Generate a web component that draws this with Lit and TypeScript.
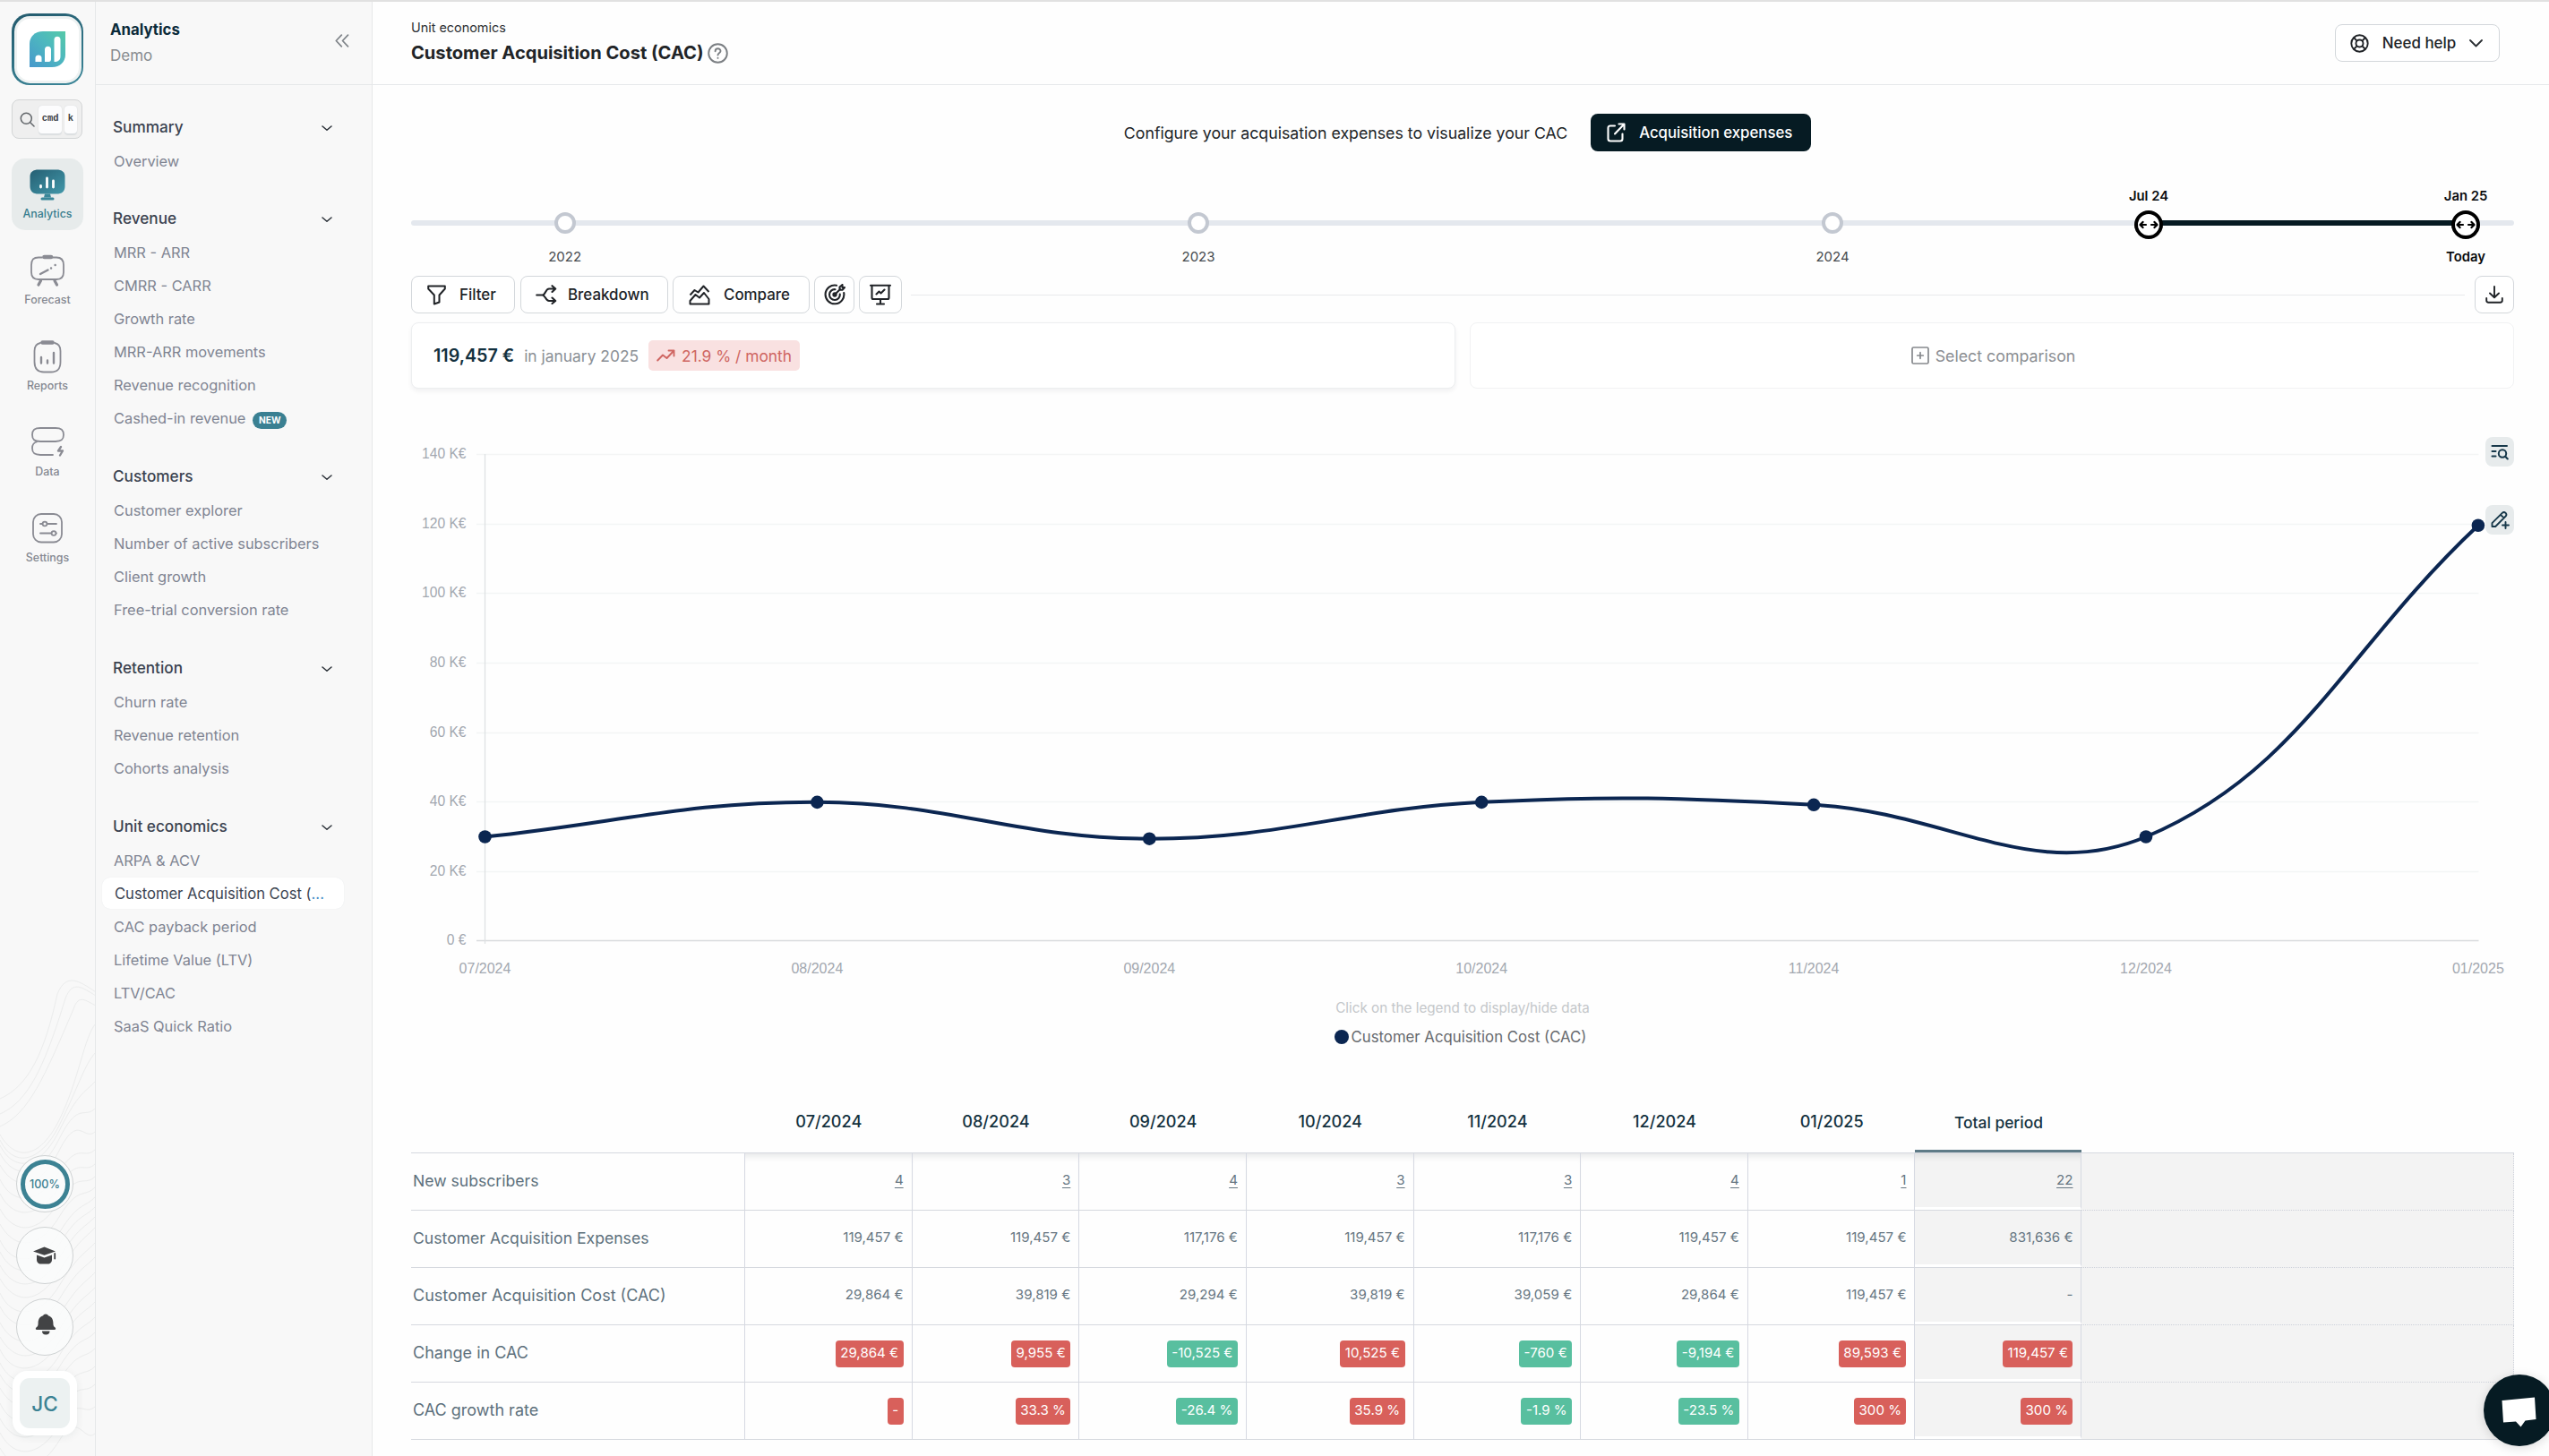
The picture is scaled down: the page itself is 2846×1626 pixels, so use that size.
import { LitElement, html, svg, css, nothing } from "lit";
import { customElement } from "lit/decorators.js";
import { classMap } from "lit/directives/class-map.js";
import { styleMap } from "lit/directives/style-map.js";

interface NavItem { label: string; isNew?: boolean; active?: boolean }
interface NavSection { title: string; items: NavItem[] }

const NAV: NavSection[] = [
  { title: "Summary", items: [{ label: "Overview" }] },
  {
    title: "Revenue",
    items: [
      { label: "MRR - ARR" }, { label: "CMRR - CARR" }, { label: "Growth rate" },
      { label: "MRR-ARR movements" }, { label: "Revenue recognition" },
      { label: "Cashed-in revenue", isNew: true },
    ],
  },
  {
    title: "Customers",
    items: [
      { label: "Customer explorer" }, { label: "Number of active subscribers" },
      { label: "Client growth" }, { label: "Free-trial conversion rate" },
    ],
  },
  { title: "Retention", items: [{ label: "Churn rate" }, { label: "Revenue retention" }, { label: "Cohorts analysis" }] },
  {
    title: "Unit economics",
    items: [
      { label: "ARPA & ACV" }, { label: "Customer Acquisition Cost (", active: true },
      { label: "CAC payback period" }, { label: "Lifetime Value (LTV)" },
      { label: "LTV/CAC" }, { label: "SaaS Quick Ratio" },
    ],
  },
];

const MONTHS = ["07/2024", "08/2024", "09/2024", "10/2024", "11/2024", "12/2024", "01/2025"];
const CAC = [29864, 39819, 29294, 39819, 39059, 29864, 119457];

type Kind = "link" | "plain" | "badge";
const ROWS: { label: string; kind: Kind; wide?: boolean; cells: string[] }[] = [
  { label: "New subscribers", kind: "link", cells: ["4", "3", "4", "3", "3", "4", "1", "22"] },
  { label: "Customer Acquisition Expenses", kind: "plain", cells: ["119,457 €", "119,457 €", "117,176 €", "119,457 €", "117,176 €", "119,457 €", "119,457 €", "831,636 €"] },
  { label: "Customer Acquisition Cost (CAC)", kind: "plain", wide: true, cells: ["29,864 €", "39,819 €", "29,294 €", "39,819 €", "39,059 €", "29,864 €", "119,457 €", "-"] },
  { label: "Change in CAC", kind: "badge", wide: true, cells: ["29,864 €", "9,955 €", "-10,525 €", "10,525 €", "-760 €", "-9,194 €", "89,593 €", "119,457 €"] },
  { label: "CAC growth rate", kind: "badge", wide: true, cells: ["-", "33.3 %", "-26.4 %", "35.9 %", "-1.9 %", "-23.5 %", "300 %", "300 %"] },
];

const chevron = html`<svg class="chev" width="12" height="7" viewBox="0 0 12 7" fill="none" stroke="#2b3138" stroke-width="1.5" stroke-linecap="round" stroke-linejoin="round"><path d="M1 1l5 4.3L11 1"/></svg>`;

@customElement("icon-rail")
class IconRail extends LitElement {
  static styles = css`
    :host { display: flex; flex-direction: column; position: relative; width: 106px; border-right: 1px solid #e6e8e9; background: #f8f8f8; box-sizing: content-box; overflow: hidden; }
    .waves { position: absolute; left: 0; bottom: 0; }
    .top { display: flex; flex-direction: column; align-items: flex-start; padding: 13px 0 0 13px; flex: 1; }
    .logo { width: 80px; height: 80px; border-radius: 20px; background: linear-gradient(160deg, #235a6d, #3c8799); padding: 2.5px; box-sizing: border-box; }
    .logo-in { width: 100%; height: 100%; border-radius: 17.5px; background: #fff; border: 3px solid #eef2f2; box-sizing: border-box; display: flex; align-items: center; justify-content: center; }
    .search { margin-top: 16px; width: 79px; height: 44px; box-sizing: border-box; border: 1px solid #d3d5d6; border-radius: 8px; background: #efefef; display: flex; align-items: center; padding: 0 6px 0 8px; gap: 3px; }
    .search svg { margin-right: 1px; flex: none; }
    kbd { box-sizing: border-box; height: 31px; border-radius: 4px; background: #fcfcfd; box-shadow: 0 1.5px 1px #dcdfe1, 0 0 1px #c9cdd0; font: 700 10.4px/28px "Liberation Mono", monospace; color: #3c4146; text-align: center; padding: 0 3.7px; }
    nav { margin-top: 22px; display: flex; flex-direction: column; gap: 16px; }
    .item { width: 80px; height: 80px; border-radius: 15px; display: flex; flex-direction: column; align-items: center; color: #858891; font-size: 12.4px; font-weight: 500; }
    .item.on { background: #e7ebeb; color: #377e8e; }
    .ico { height: 53px; padding-top: 3px; box-sizing: border-box; display: flex; align-items: center; justify-content: center; }
    .ico.low { padding-top: 5px; }
    .item span { line-height: 18px; }
    .bottom { position: relative; display: flex; flex-direction: column; align-items: center; width: 100px; padding-bottom: 23px; }
    .round { width: 64px; height: 64px; box-sizing: border-box; border: 1px solid #cfd2d3; border-radius: 50%; background: rgba(250, 251, 251, 0.85); display: flex; align-items: center; justify-content: center; margin-bottom: 16px; }
    .ring { width: 55px; height: 55px; box-sizing: border-box; border: 5px solid #3c8293; border-radius: 50%; font-size: 12.6px; font-weight: 500; color: #3c7f90; display: flex; align-items: center; justify-content: center; }
    .user { margin-top: 1px; width: 72px; height: 72px; border-radius: 16px; background: #fff; box-shadow: 0 2px 10px rgba(20, 50, 60, 0.07); display: flex; align-items: center; justify-content: center; }
    .avatar { width: 56px; height: 56px; border-radius: 11px; background: #ecf1f1; color: #3b8293; font-size: 22.5px; font-weight: 500; display: flex; align-items: center; justify-content: center; }
    .bell { margin: -7px 0 0 2px; }
  `;

  private waves() {
    const left = [132, 149, 163, 172, 178, 184, 193, 206, 222, 238, 255, 272, 290, 303, 318, 333, 349, 364, 382, 398, 412, 427, 440, 455, 472, 489, 505, 522];
    const right = [13, 17, 28, 48, 80, 112, 142, 168, 188, 204, 218, 230, 241, 252, 263, 275, 292, 308, 325, 342, 358, 375, 392, 410, 430, 450, 475, 505];
    return left.map((l, i) => {
      const r = right[i] + 35;
      const y = l + 35;
      const d = i < 3
        ? `M0 ${y}C32 ${y - 14} 50 ${y - 52 - i * 2} ${64 + i * 9} ${r + 2 + i}C${74 + i * 7} ${r - 22 + i * 4} ${88 + i * 4} ${r - 13 + i * 4} 107 ${r}`
        : `M0 ${y}C${14 + (i % 4)} ${y + 30} ${44} ${y + 28} 66 ${y - 8 - (i < 8 ? 8 : 0)}S${94} ${r + 14} 107 ${r}`;
      return svg`<path d=${d}/>`;
    });
  }

  private item(label: string, icon: unknown, on = false) {
    return html`<div class=${classMap({ item: true, on })}><div class=${classMap({ ico: true, low: label !== "Data" })}>${icon}</div><span>${label}</span></div>`;
  }

  render() {
    return html`
      <svg class="waves" width="107" height="566" viewBox="0 0 107 566" fill="none" stroke="#ebecec" stroke-width="1">${this.waves()}</svg>
      <div class="top">
        <div class="logo"><div class="logo-in">
          <svg width="40" height="40" viewBox="0 0 40 40">
            <defs><linearGradient id="lg" x1="0" y1="1" x2="1" y2="0"><stop offset="0" stop-color="#4798cc"/><stop offset=".55" stop-color="#4db7bf"/><stop offset="1" stop-color="#56c9a8"/></linearGradient></defs>
            <path d="M15 0H40V26C40 34 34 40 25 40H0V14C0 6 6 0 15 0Z" fill="url(#lg)"/>
            <path d="M6.5 34V29.5C6.5 25.5 13.5 25.5 13.5 29.5V34ZM17 34V20C17 15.5 24 15.5 24 20V31C24 33 23 34 21.500 34ZM27.500 34V9C27.500 4.500 34.500 4.500 34.500 9V28C34.500 32 32 34 27.500 34Z" fill="#fff"/>
          </svg></div></div>
        <div class="search">
          <svg width="17" height="17" viewBox="0 0 17 17" fill="none" stroke="#63676b" stroke-width="1.5" stroke-linecap="round"><circle cx="7.300" cy="7.300" r="6"/><path d="M12 12l4 4"/></svg>
          <kbd>cmd</kbd><kbd>k</kbd>
        </div>
        <nav>
          ${this.item("Analytics", html`<svg width="40" height="35" viewBox="0 0 40 35">
            <defs><linearGradient id="mg" x1="0" y1="0" x2="1" y2="1"><stop offset="0" stop-color="#255f73"/><stop offset="1" stop-color="#4298aa"/></linearGradient></defs>
            <path d="M10 .5H30C36 .5 39.500 3 39.500 8V19C39.500 25 36 27.500 30 27.500H10C4 27.500 .5 25 .5 19V8C.5 3 4 .5 10 .5Z" fill="url(#mg)"/>
            <path d="M12.500 18.500V20M19.500 10V20M26.500 13V20" stroke="#fff" stroke-width="2.800" stroke-linecap="round"/>
            <path d="M17 27.500H23L24 31.500H16Z" fill="#3a8799"/><path d="M14 33H26" stroke="#3a8799" stroke-width="3" stroke-linecap="round"/></svg>`, true)}
          ${this.item("Forecast", html`<svg width="38" height="37" viewBox="0 0 38 37" fill="none" stroke="#8a8b93" stroke-width="1.800" stroke-linecap="round">
            <path d="M13 3.500H9C3.500 3.500 1 6 1 12V20C1 25.500 3.500 28 9 28H29C34.500 28 37 25.500 37 20V12C37 6 34.500 3.500 29 3.500H25"/>
            <path d="M15.500 3H23" stroke-width="4.600"/><path d="M11.500 29.500L9 34M27 29.500L29.500 34" stroke-width="3.200"/>
            <path d="M11 22L19.500 17.500M23 15.500h.1M27.600 12h.1" stroke-width="2.400"/></svg>`)}
          ${this.item("Reports", html`<svg width="32" height="38" viewBox="0 0 32 38" fill="none" stroke="#8a8b93" stroke-width="1.800" stroke-linecap="round">
            <path d="M8 4C3 5 1.500 8 1.500 13V25C1.500 33 5 36.500 12 36.500H20C27 36.500 30.500 33 30.500 25V13C30.500 8 29 5 24 4"/>
            <path d="M10.500 3.500H21.500" stroke-width="4.600"/><path d="M9 20V26.500M16 23.500V26.500M23 15V26.500" stroke-width="2.400"/></svg>`)}
          ${this.item("Data", html`<svg width="37" height="33" viewBox="0 0 37 33" fill="none" stroke="#8a8b93" stroke-width="1.800" stroke-linecap="round" stroke-linejoin="round">
            <path d="M10 1H27C33.500 1 36 3 36 8.500S33.500 16 27 16H10C3.500 16 1 14 1 8.500S3.500 1 10 1Z"/><path d="M6 16.500C2 17.500 1 20 1 23.500C1 29 3.500 31 10 31H24"/>
            <path d="M33 22L30 26.500H35L32 31.500" stroke-width="2.300"/></svg>`)}
          ${this.item("Settings", html`<svg width="34" height="34" viewBox="0 0 34 34" fill="none" stroke="#8a8b93" stroke-width="1.800" stroke-linecap="round">
            <rect x="1" y="1" width="32" height="31.500" rx="9"/><path d="M9 12h2M17 12h10M9 22.500h12M27 22.500h0"/><circle cx="14" cy="12" r="2.400"/><circle cx="24" cy="22.500" r="2.400"/></svg>`)}
        </nav>
      </div>
      <div class="bottom">
        <div class="round"><div class="ring">100%</div></div>
        <div class="round"><svg width="26" height="20" viewBox="0 0 26 20"><path d="M0 5.500L12.500 0.500L25 5.500L12.500 9.800Z" fill="#424345"/><path d="M4 9.500L12.500 12.400L21 9.500V14.500C21 18 19 19.500 16.500 19.500H8.500C6 19.500 4 18 4 14.500Z" fill="#424345"/><path d="M24.200 8V13.500" stroke="#424345" stroke-width="1.800" stroke-linecap="round"/></svg></div>
        <div class="round"><svg class="bell" width="24" height="24" viewBox="0 0 24 24"><path d="M12 0.500C13.600 .5 14.500 1.300 14.800 2.300C18.800 3.500 20.400 6.500 20.400 10.500C20.400 13.500 21 14.300 22.600 15.600C23.800 16.800 23.200 18 21.800 18H2.200C.8 18 .2 16.800 1.400 15.600C3 14.300 3.600 13.500 3.600 10.500C3.600 6.500 5.200 3.500 9.200 2.300C9.500 1.300 10.400 .5 12 .5Z" fill="#424345"/><path d="M8 19.500H16.500C16.500 22 15 23.500 12.200 23.500S8 22 8 19.500Z" fill="#424345"/></svg></div>
        <div class="user"><div class="avatar">JC</div></div>
      </div>`;
  }
}

@customElement("side-panel")
class SidePanel extends LitElement {
  static styles = css`
    :host { display: block; width: 308px; border-right: 1px solid #e6e8e9; background: #f8f8f8; }
    .head { height: 93px; box-sizing: border-box; border-bottom: 1px solid #e6e8e9; display: flex; justify-content: space-between; padding: 17px 25px 0 16px; }
    .head b { display: block; font-size: 16.8px; line-height: 28px; color: #0b2b3a; font-weight: 700; }
    .head span { font-size: 17px; line-height: 30px; color: #878b8f; }
    .collapse { margin-top: 19px; }
    section { margin-bottom: 25.8px; }
    .list { padding-top: 26px; }
    h3 { margin: 0; height: 40px; padding: 0 44px 0 19px; display: flex; align-items: center; justify-content: space-between; font-size: 17.2px; font-weight: 500; color: #3b4350; }
    .chev { margin-top: 4px; }
    .item { height: 37px; display: flex; align-items: center; padding-left: 20px; font-size: 16.4px; color: #7f8492; white-space: pre; }
    .item.on { margin: 1px 31px 1px 7px; height: 35px; box-sizing: border-box; border-radius: 9px; background: #fff; padding: 0 0 0 14px; color: #3b4350; box-shadow: 0 0 1px #dfe3e6; font-size: 16.6px; }
    i { font-style: normal; color: #4a90c9; }
    em { margin: 5px 0 0 8px; height: 19px; line-height: 18px; border-radius: 10px; background: #3a8092; color: #fff; font-style: normal; font-weight: 700; font-size: 10.2px; padding: 0 6.500px; letter-spacing: 0.1px; }
  `;
  render() {
    return html`
      <div class="head">
        <div><b>Analytics</b><span>Demo</span></div>
        <svg class="collapse" width="16" height="15" viewBox="0 0 16 15" fill="none" stroke="#7f8489" stroke-width="1.700" stroke-linecap="round" stroke-linejoin="round"><path d="M7.300 1.200L1.300 7.500L7.300 13.800M14.500 1.200L8.500 7.500L14.500 13.800"/></svg>
      </div>
      <div class="list">
        ${NAV.map((s) => html`<section><h3>${s.title}${chevron}</h3>
          ${s.items.map((it) => html`<div class=${classMap({ item: true, on: !!it.active })}>${it.label}${it.active ? html`<i>...</i>` : nothing}${it.isNew ? html`<em>NEW</em>` : nothing}</div>`)}
        </section>`)}
      </div>`;
  }
}

@customElement("period-slider")
class PeriodSlider extends LitElement {
  static styles = css`
    :host { display: block; position: relative; height: 139px; }
    .track { position: absolute; left: 0; right: 0; top: 77px; height: 6px; border-radius: 3px; background: #e4e8ee; }
    .range { position: absolute; top: 77px; height: 6px; background: #061a22; }
    .year, .handle, .lab { position: absolute; transform: translate(-50%, -50%); box-sizing: border-box; border-radius: 50%; background: #fff; }
    .year { top: 79.700px; width: 24px; height: 24px; border: 4px solid #c3c8d1; }
    .handle { top: 81.600px; width: 32px; height: 32px; border: 4px solid #000; display: flex; align-items: center; justify-content: center; }
    .lab { background: none; border-radius: 0; font-size: 15px; line-height: 20px; color: #45494d; white-space: nowrap; }
    .lab.below { top: 118px; }
    .lab.above { top: 50px; }
    .lab.strong { font-weight: 600; font-size: 14.800px; color: #0a0c0e; }
  `;
  render() {
    const years: [string, number][] = [["2022", 171.6], ["2023", 879], ["2024", 1587]];
    const handles: [string, number][] = [["Jul 24", 1940], ["Jan 25", 2294]];
    const px = (v: number) => ({ left: `${(v / 2348) * 100}%` });
    return html`
      <div class="track"></div>
      <div class="range" style=${styleMap({ ...px(1940), width: `${(354 / 2348) * 100}%` })}></div>
      ${years.map(([t, x]) => html`<div class="year" style=${styleMap(px(x))}></div><div class="lab below" style=${styleMap(px(x))}>${t}</div>`)}
      ${handles.map(([t, x]) => html`<div class="handle" style=${styleMap(px(x))}>
        <svg width="22" height="10" viewBox="0 0 22 10" fill="none" stroke="#000" stroke-width="2.200" stroke-linecap="round" stroke-linejoin="round"><path d="M8 5H2M4.500 1.900L1.500 5L4.500 8.100M14 5H20M17.500 1.900L20.500 5L17.500 8.100"/></svg>
      </div><div class="lab above strong" style=${styleMap(px(x))}>${t}</div>`)}
      <div class="lab below strong" style=${styleMap(px(2294))}>Today</div>`;
  }
}

@customElement("cac-chart")
class CacChart extends LitElement {
  static styles = css`
    :host { display: block; position: relative; height: 671px; }
    text { font: 16px "Liberation Sans", Arial, sans-serif; fill: #a3a8b0; }
    .y { text-anchor: end; font-size: 15.600px; }
    .x { text-anchor: middle; }
    .tool { position: absolute; right: 0; width: 32px; height: 33px; border-radius: 8px; background: #e7ebec; display: flex; align-items: center; justify-content: center; }
    .find { top: 54px; }
    .edit { top: 130px; }
  `;
  private px = (i: number) => 82.5 + i * 370.9;
  private py = (v: number) => 616.4 - (v / 140000) * 543.4;

  /* Bezier spline whose control points follow the neighbouring points, tension 0.4. */
  private line() {
    const p = CAC.map((v, i) => ({ x: this.px(i), y: this.py(v) }));
    const ctl = p.map((c, i) => {
      const a = p[i - 1] ?? c;
      const b = p[i + 1] ?? c;
      const d0 = Math.hypot(c.x - a.x, c.y - a.y);
      const d1 = Math.hypot(b.x - c.x, b.y - c.y);
      const s0 = (0.4 * d0) / (d0 + d1);
      const s1 = (0.4 * d1) / (d0 + d1);
      return {
        ax: c.x - s0 * (b.x - a.x), ay: c.y - s0 * (b.y - a.y),
        bx: c.x + s1 * (b.x - a.x), by: c.y + s1 * (b.y - a.y),
      };
    });
    return p.slice(1).reduce((d, c, i) => `${d}C${ctl[i].bx} ${ctl[i].by} ${ctl[i + 1].ax} ${ctl[i + 1].ay} ${c.x} ${c.y}`, `M${p[0].x} ${p[0].y}`);
  }

  render() {
    const ticks = [0, 20, 40, 60, 80, 100, 120, 140];
    return html`
      <svg width="2348" height="671" viewBox="0 0 2348 671">
        ${ticks.map((t) => svg`<path d=${`M73 ${Math.round(this.py(t * 1000)) + 0.5}H2308.500`} stroke=${t ? "#f3f5f5" : "#d9dbdd"} stroke-width="1.500"/>
          <text class="y" x="61.500" y=${this.py(t * 1000) + 5}>${t ? `${t} K€` : "0 €"}</text>`)}
        <path d="M82.500 73V620" stroke="#dfe1e3" stroke-width="1.300"/>
        ${MONTHS.map((m, i) => svg`<text class="x" x=${this.px(i)} y="653">${m}</text>`)}
        <path d=${this.line()} fill="none" stroke="#0b2651" stroke-width="4"/>
        ${CAC.map((v, i) => svg`<circle cx=${this.px(i)} cy=${this.py(v)} r="7.300" fill="#0b2651"/>`)}
      </svg>
      <div class="tool find"><svg width="20" height="18" viewBox="0 0 20 18" fill="none" stroke="#17384a" stroke-width="2" stroke-linecap="round"><path d="M1.500 2H18M1.500 8H5.500M1.500 13.500H5.500"/><circle cx="13" cy="10.500" r="4.200"/><path d="M16.200 13.800L18.800 16.500"/></svg></div>
      <div class="tool edit"><svg width="21" height="20" viewBox="0 0 21 20" fill="none" stroke="#17384a" stroke-width="1.900" stroke-linecap="round" stroke-linejoin="round"><path d="M1.500 17V13.200L12.800 1.900C14.200 .7 15.800 1 16.600 1.900C17.600 3 17.600 4.400 16.600 5.500L5.200 17Z M11 3.800L14.600 7.400"/><path d="M16.500 12V19M13 15.500H20"/></svg></div>`;
  }
}

@customElement("data-table")
class DataTable extends LitElement {
  static styles = css`
    :host { display: block; }
    .row { display: grid; grid-template-columns: 373px repeat(7, 186.650px) 186px 1fr; height: 63px; border-bottom: 1px solid #d6d9df; }
    .head { height: 76px; }
    .head > div { display: flex; align-items: center; justify-content: center; font-size: 18.100px; font-weight: 500; color: #14323f; padding-top: 6px; }
    .head .total { font-size: 17.400px; padding: 12px 0 0 0; border-bottom: 3px solid #5f7b87; }
    .name { display: flex; align-items: center; padding: 0 0 3px 2px; font-size: 17.600px; color: #5d707c; border-right: 1px solid #d6d9e2; white-space: nowrap; }
    .name.wide { font-size: 18px; }
    .cell { display: flex; align-items: center; justify-content: flex-end; padding: 0 9px 0 0; border-right: 1px solid #d6d9e2; font-size: 15.100px; color: #667682; }
    .cell span { padding-bottom: 4px; }
    .cell .link { text-decoration: underline; text-underline-offset: 3px; padding-bottom: 5px; }
    .cell .badge { box-sizing: border-box; height: 30px; line-height: 27px; border-radius: 4px; padding: 0 5.500px; color: #fff; background: #d8605b; }
    .cell .badge.good { background: #58bf9f; }
    .cell.total { background: #f3f3f3; border-bottom: 3px solid #fff; padding-top: 3px; }
    .shade .cell { box-shadow: inset 0 9px 8px -7px rgba(60, 70, 80, 0.16); }
    .rest { background: #f3f3f3; border-right: 1px dotted #cdd1da; margin-bottom: -1px; border-bottom: 1px dotted #cdd1da; }
    .row:last-child .rest { margin-bottom: 0; border-bottom: none; }
    .head .void { background: none; }
  `;
  private value(kind: Kind, v: string) {
    if (kind === "link") return html`<span class="link">${v}</span>`;
    if (kind === "plain") return html`<span>${v}</span>`;
    return html`<span class=${classMap({ badge: true, good: v.length > 1 && v.startsWith("-") })}>${v}</span>`;
  }
  render() {
    return html`
      <div class="row head"><div></div>${MONTHS.map((m) => html`<div>${m}</div>`)}<div class="total">Total period</div><div class="void"></div></div>
      ${ROWS.map((r, ri) => html`<div class=${classMap({ row: true, shade: ri === 0 })}>
        <div class=${classMap({ name: true, wide: !!r.wide })}>${r.label}</div>
        ${r.cells.map((c, i) => html`<div class=${classMap({ cell: true, total: i === 7 })}>${this.value(r.kind, c)}</div>`)}
        <div class="rest"></div>
      </div>`)}`;
  }
}

@customElement("app-root")
class AppRoot extends LitElement {
  static styles = css`
    :host { display: flex; flex-direction: column; position: relative; height: 1626px; overflow: hidden; background: #fff; font-family: Inter, "Liberation Sans", sans-serif; color: #202427; }
    .strip { height: 2px; background: #e1e1e1; flex: none; }
    .shell { display: flex; flex: 1; min-height: 0; }
    main { flex: 1; min-width: 0; background: #fefefe; }
    header { height: 93px; box-sizing: border-box; border-bottom: 1px solid #e6e8ea; display: flex; justify-content: space-between; padding: 17px 55px 0 43px; }
    .crumb { font-size: 14.400px; line-height: 24px; color: #2c3033; }
    h1 { margin: 4px 0 0; display: flex; align-items: center; gap: 5px; font-size: 20.100px; line-height: 24px; font-weight: 700; color: #212427; }
    .btn { box-sizing: border-box; height: 42px; border: 1px solid #d3d7db; border-radius: 8px; background: #fff; display: flex; align-items: center; font-size: 16.900px; font-weight: 500; color: #202327; white-space: nowrap; }
    .help { width: 184px; margin-top: 8px; padding: 0 18px 0 16px; justify-content: space-between; }
    .body { padding: 32px 39px 0 43px; }
    .configure { display: flex; justify-content: center; align-items: center; gap: 26px; height: 42px; font-size: 17.740px; padding-left: 11px; }
    .primary { display: flex; align-items: center; gap: 15px; width: 246px; height: 42px; box-sizing: border-box; border-radius: 8px; background: #061b23; color: #fff; font-size: 16.800px; font-weight: 500; padding-left: 18px; }
    .tools { display: flex; align-items: center; height: 42px; }
    .filter { width: 116px; padding-left: 17px; gap: 15px; margin-right: 6px; }
    .break { width: 165px; padding-left: 16px; gap: 12px; margin-right: 5px; }
    .compare { width: 153px; padding-left: 17px; gap: 15px; margin-right: 5px; }
    .sq { justify-content: center; width: 45px; margin-right: 5px; }
    .sq.wide { width: 48px; margin-right: 10px; }
    .sq.dl { width: 44px; margin: 0 0 0 11px; }
    .rule { flex: 1; height: 1px; background: #e8eaec; }
    .cards { display: grid; grid-template-columns: 1fr 1fr; gap: 16px; margin-top: 10px; }
    .card { height: 74px; box-sizing: border-box; border: 1px solid #eceef0; border-radius: 8px; background: #fff; display: flex; align-items: center; }
    .kpi { padding-left: 24px; box-shadow: 0 3px 5px rgba(30, 40, 50, 0.06); }
    .kpi strong { font-size: 19.700px; color: #12303e; font-weight: 600; }
    .kpi .when { margin-left: 11px; font-size: 17.400px; color: #8b9096; }
    .trend { margin-left: 11px; height: 34px; width: 169px; box-sizing: border-box; padding-left: 9px; border-radius: 5px; background: #f9e1e1; color: #cf6662; font-size: 17.350px; display: flex; align-items: center; gap: 7px; }
    .pick { justify-content: center; gap: 7px; color: #8b8e92; font-size: 17.800px; padding-left: 3px; border-color: #f1f2f3; }
    .hint { text-align: center; font-size: 15.250px; line-height: 20px; color: #c4c7ca; padding-top: 11px; }
    .legend { display: flex; justify-content: center; align-items: center; gap: 3px; height: 20px; margin-top: 12px; padding-bottom: 43px; font-size: 16.750px; color: #66696d; margin-left: -5px; }
    .dot { width: 16px; height: 16px; border-radius: 50%; background: #0b2651; }
    .chat { position: absolute; left: 2773px; top: 1535px; width: 80px; height: 80px; border-radius: 50%; background: #061b23; box-shadow: 0 2px 12px rgba(0, 0, 0, 0.14); }
    .chat svg { position: absolute; left: 20px; top: 25px; }
  `;
  render() {
    return html`
      <div class="strip"></div>
      <div class="shell">
        <icon-rail></icon-rail>
        <side-panel></side-panel>
        <main>
          <header>
            <div>
              <div class="crumb">Unit economics</div>
              <h1>Customer Acquisition Cost (CAC)
                <svg width="23" height="23" viewBox="0 0 23 23" fill="none" stroke="#7b7f83" stroke-width="1.900" stroke-linecap="round"><circle cx="11.500" cy="11.500" r="10.300"/><path d="M8.600 9.200C8.600 5.300 14.500 5.300 14.500 9C14.500 11.300 11.500 11.300 11.500 13.600M11.500 16.800v.1"/></svg>
              </h1>
            </div>
            <div class="btn help">
              <svg width="21" height="21" viewBox="0 0 21 21" fill="none" stroke="#202327" stroke-width="1.900"><circle cx="10.500" cy="10.500" r="9.200"/><circle cx="10.500" cy="10.500" r="4"/><path d="M4 4L7.600 7.600M17 4L13.400 7.600M4 17L7.600 13.400M17 17L13.400 13.400"/></svg>
              <span>Need help</span>
              <svg width="15" height="9" viewBox="0 0 15 9" fill="none" stroke="#2b2f33" stroke-width="1.800" stroke-linecap="round" stroke-linejoin="round"><path d="M1 1L7.500 7.500L14 1"/></svg>
            </div>
          </header>
          <div class="body">
            <div class="configure">
              <span>Configure your acquisation expenses to visualize your CAC</span>
              <div class="primary">
                <svg width="21" height="22" viewBox="0 0 21 22" fill="none" stroke="#fff" stroke-width="2.100" stroke-linecap="round" stroke-linejoin="round"><path d="M9 3.500H4C2 3.500 1.500 4.500 1.500 6V18C1.500 20 2.500 20.500 4 20.500H15C17 20.500 17.500 19.500 17.500 18V12.500M9 12.500L19.500 1.500M13.500 1.500H19.500V7.500"/></svg>
                <span>Acquisition expenses</span>
              </div>
            </div>
            <period-slider></period-slider>
            <div class="tools">
              <div class="btn filter"><svg width="21" height="23" viewBox="0 0 21 23" fill="none" stroke="#202327" stroke-width="2" stroke-linejoin="round"><path d="M1.200 1.500H19.800V4.500L13.500 11.500V19.500L7.800 21.500V11.500L1.200 4.500Z"/></svg><span>Filter</span></div>
              <div class="btn break"><svg width="24" height="22" viewBox="0 0 24 22" fill="none" stroke="#202327" stroke-width="2.100" stroke-linecap="round" stroke-linejoin="round"><path d="M1.200 11.500H7.500C11 11.500 11 4.500 15 4.500H22M7.500 11.500C11 11.500 11 18 15 18H22M18.500 1.200L22.200 4.500L18.500 8M18.500 14.500L22.200 18L18.500 21"/></svg><span>Breakdown</span></div>
              <div class="btn compare"><svg width="24" height="23" viewBox="0 0 24 23" fill="none" stroke="#202327" stroke-width="2" stroke-linejoin="round"><path d="M1.500 11.500L6.500 6L10.500 8.500L16.500 1.500L22.500 8"/><path d="M1.500 21.500V18L7.500 11L12 14.500L17 9L22.500 16V21.500Z"/></svg><span>Compare</span></div>
              <div class="btn sq"><svg width="24" height="24" viewBox="0 0 24 24" fill="none" stroke="#202327" stroke-width="2.100" stroke-linecap="round" stroke-linejoin="round"><path d="M14 1.700A10.400 10.400 0 1 0 22.200 10"/><path d="M12.500 6.200A5.900 5.900 0 1 0 17.800 11.500"/><circle cx="12" cy="12" r="1.600"/><path d="M12 12L18 6M17.500 6.500V3.500L20.500 1V4H23L20.500 6.800Z"/></svg></div>
              <div class="btn sq wide"><svg width="24" height="24" viewBox="0 0 24 24" fill="none" stroke="#202327" stroke-width="2.100" stroke-linecap="round" stroke-linejoin="round"><path d="M1 1.700H23M2.500 1.700V15.500C2.500 16.500 3 17 4 17H20C21 17 21.500 16.500 21.500 15.500V1.700M12 17V22.500M8 22.500H16M7.500 11.500L10.500 8.500L12.500 10.500L16.500 6.500"/></svg></div>
              <div class="rule"></div>
              <div class="btn sq dl"><svg width="20" height="20" viewBox="0 0 20 20" fill="none" stroke="#202327" stroke-width="1.900" stroke-linecap="round" stroke-linejoin="round"><path d="M10 1V13M5 8.500L10 13.200L15 8.500M1.200 14V16.500C1.200 18 2 18.700 3.500 18.700H16.500C18 18.700 18.800 18 18.800 16.500V14"/></svg></div>
            </div>
            <div class="cards">
              <div class="card kpi">
                <strong>119,457 €</strong><span class="when">in january 2025</span>
                <div class="trend"><svg width="21" height="14" viewBox="0 0 21 14" fill="none" stroke="#cf6662" stroke-width="1.900" stroke-linecap="round" stroke-linejoin="round"><path d="M1.200 12.500L7 6.500L11.500 10L19.500 1.500M13.500 1.500H19.500V7.500"/></svg><span>21.9 % / month</span></div>
              </div>
              <div class="card pick">
                <svg width="20" height="20" viewBox="0 0 20 20" fill="none" stroke="#86898d" stroke-width="1.700" stroke-linecap="round"><rect x="1" y="1" width="18" height="18" rx="1.500"/><path d="M10 6.700V13.300M6.700 10H13.300"/></svg>
                <span>Select comparison</span>
              </div>
            </div>
            <cac-chart></cac-chart>
            <div class="hint">Click on the legend to display/hide data</div>
            <div class="legend"><div class="dot"></div><span>Customer Acquisition Cost (CAC)</span></div>
            <data-table></data-table>
          </div>
        </main>
      </div>
      <div class="chat"><svg width="40" height="34" viewBox="0 0 40 34"><path d="M0.500 4L37 0.500L38.500 25L26.500 26.500L21.500 33.500L16 27.500L2 28.500Z" fill="#fff"/></svg></div>`;
  }
}
